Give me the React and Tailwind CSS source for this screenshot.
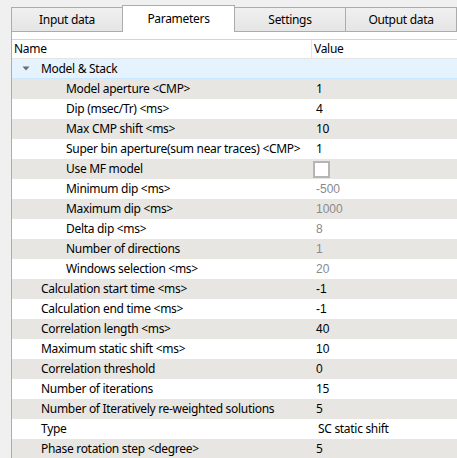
import React from "react";

const rows = [
  { name: "Model aperture <CMP>", value: "1", level: 2 },
  { name: "Dip (msec/Tr) <ms>", value: "4", level: 2 },
  { name: "Max CMP shift <ms>", value: "10", level: 2 },
  { name: "Super bin aperture(sum near traces) <CMP>", value: "1", level: 2 },
  { name: "Use MF model", value: null, check: true, level: 2 },
  { name: "Minimum dip <ms>", value: "-500", level: 2, dis: true },
  { name: "Maximum dip <ms>", value: "1000", level: 2, dis: true },
  { name: "Delta dip <ms>", value: "8", level: 2, dis: true },
  { name: "Number of directions", value: "1", level: 2, dis: true },
  { name: "Windows selection <ms>", value: "20", level: 2, dis: true },
  { name: "Calculation start time <ms>", value: "-1", level: 1, arial: true },
  { name: "Calculation end time <ms>", value: "-1", level: 1, arial: true },
  { name: "Correlation length <ms>", value: "40", level: 1, arial: true },
  { name: "Maximum static shift <ms>", value: "10", level: 1, arial: true },
  { name: "Correlation threshold", value: "0", level: 1, arial: true },
  { name: "Number of iterations", value: "15", level: 1 },
  { name: "Number of Iteratively re-weighted solutions", value: "5", level: 1 },
  { name: "Type", value: "SC static shift", level: 1, pad: true },
  { name: "Phase rotation step <degree>", value: "5", level: 1 },
];

function Tab({ label, selected }) {
  if (selected) {
    return (
      <div className="relative z-10 -mb-px flex h-[27px] w-[113px] items-start justify-center border border-b-0 border-[#acacac] bg-[#ffffff] pt-[4px] text-[12px] text-black">
        {label}
      </div>
    );
  }
  return (
    <div className="flex h-[24px] w-[112px] items-center justify-center border border-b-0 border-[#acacac] bg-gradient-to-b from-[#f0f0f0] to-[#e5e5e5] text-[12px] text-black">
      {label}
    </div>
  );
}

export default function App() {
  return (
    <div
      className="h-[458px] w-[457px] overflow-hidden bg-[#f0f0f0] text-black tracking-[-0.3px]"
      style={{ fontFamily: '"Noto Sans", "Open Sans", sans-serif' }}
    >
      <div className="flex h-[31px] items-end pl-[11px]">
        <Tab label="Input data" />
        <div className="-ml-px">
          <Tab label="Parameters" selected />
        </div>
        <div className="-ml-px flex">
          <Tab label="Settings" />
        </div>
        <div className="-ml-px flex">
          <Tab label="Output data" />
        </div>
      </div>
      <div className="ml-[11px] border-t border-l border-[#acacac] bg-[#ffffff] pt-[7px]">
        <div className="border-t border-[#d4d4d4]">
          <div className="flex h-[19px] items-center border-b border-[#e5e5e5] bg-white text-[12px]">
            <div className="flex h-full w-[300px] items-center border-r border-[#e5e5e5] pl-[2px]">Name</div>
            <div className="pl-[2px]">Value</div>
          </div>
          <div className="flex h-[20px] items-center border-b border-[#cce8ff] bg-[#e5f3ff] text-[12px]">
            <div className="flex w-[300px] items-center">
              <svg width="8" height="5" viewBox="0 0 8 5" className="ml-[10px] mr-[11px]">
                <path d="M0.5 0.5 L7.5 0.5 L4 4.5 Z" fill="#6b6b6b" />
              </svg>
              <span>Model &amp; Stack</span>
            </div>
          </div>
          {rows.map((r, i) => (
            <div
              key={i}
              className={`flex h-[20px] items-center text-[12px] ${i % 2 === 0 ? "bg-[#e8e6e3]" : "bg-white"}`}
            >
              <div className={`w-[300px] whitespace-nowrap ${r.level === 2 ? "pl-[54px]" : "pl-[29px]"}`}>
                {r.name}
              </div>
              <div
                className={`${r.check ? "pl-[1px]" : r.pad ? "pl-[6px]" : "pl-[4px]"} ${r.dis ? "text-[#8a8a8a]" : "text-black"}`}
                style={r.arial || r.dis ? { fontFamily: '"Liberation Sans", Arial, sans-serif', letterSpacing: 0 } : undefined}
              >
                {r.check ? (
                  <div className="mt-[1px] h-[17px] w-[17px] border-2 border-[#b5b5b5] bg-white" />
                ) : (
                  r.value
                )}
              </div>
            </div>
          ))}
        </div>
      </div>
    </div>
  );
}
